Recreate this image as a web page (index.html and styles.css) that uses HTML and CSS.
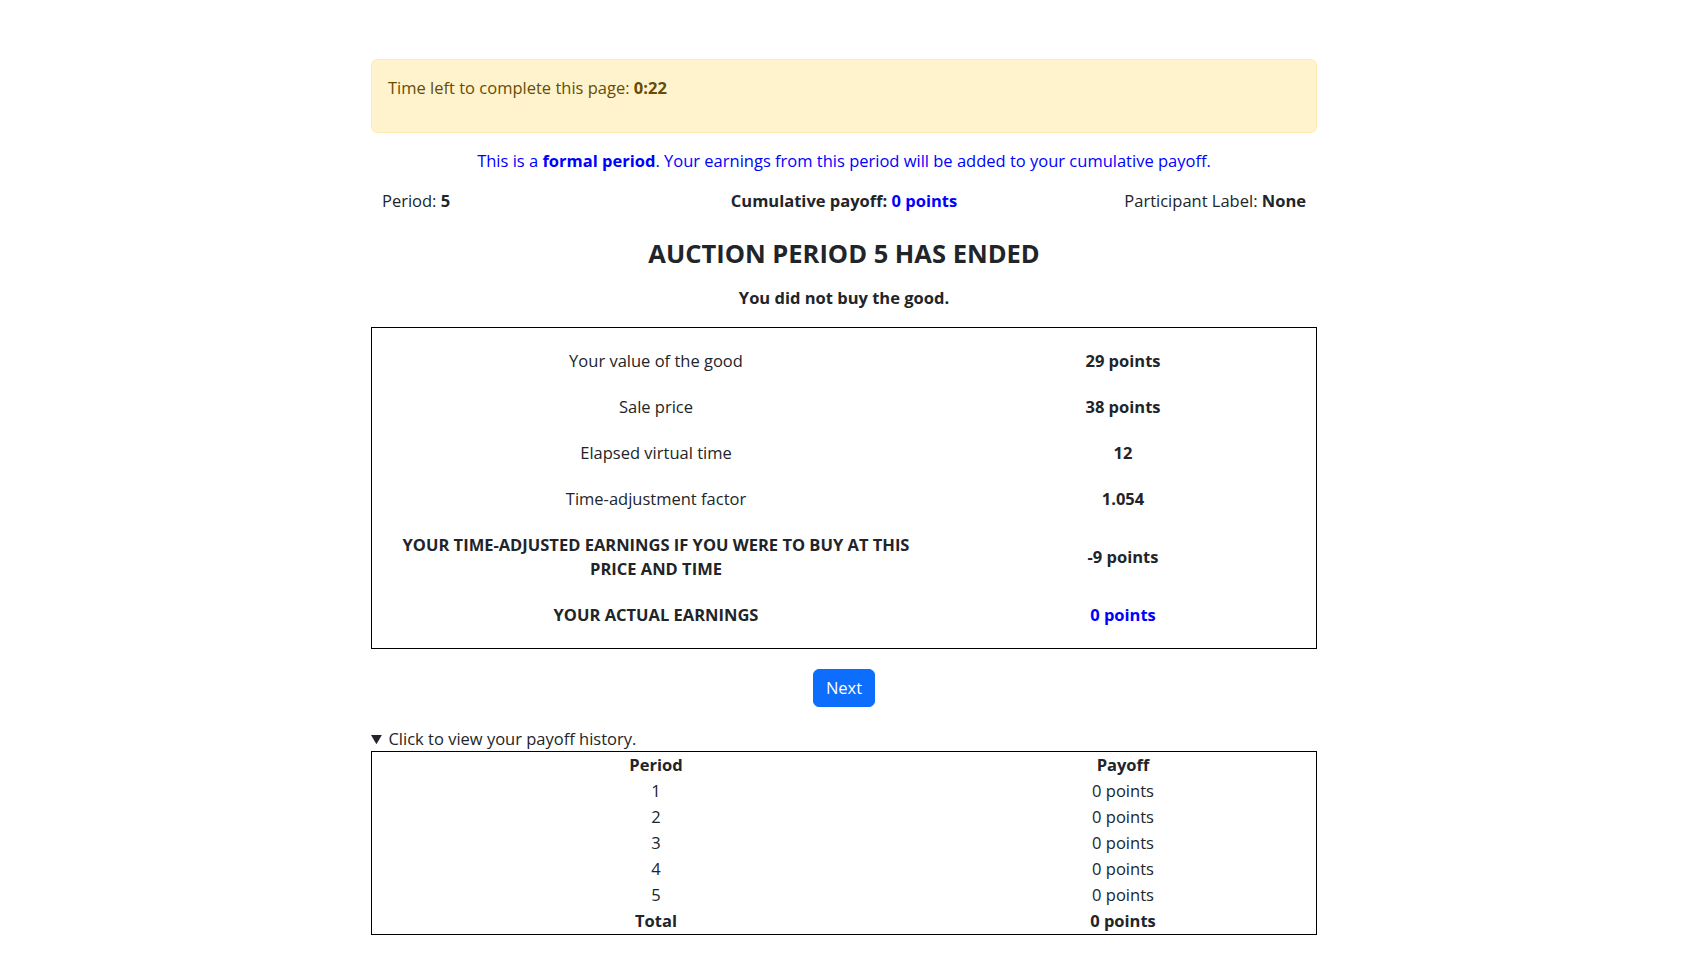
FILE: index.html
```html
<!DOCTYPE html>
<html lang="en">
<head>
<meta charset="utf-8">
<title>Auction period 5</title>
<link rel="stylesheet" href="styles.css">
</head>
<body>
<div class="page">
  <div class="alert"><p>Time left to complete this page: <b>0:22</b></p></div>
  <p class="notice">This is a <b>formal period</b>. Your earnings from this period will be added to your cumulative payoff.</p>
  <div class="info-row">
    <span class="info-left">Period: <b>5</b></span>
    <span class="info-mid"><b>Cumulative payoff: <span class="blue">0 points</span></b></span>
    <span class="info-right">Participant Label: <b>None</b></span>
  </div>
  <h3 class="title">AUCTION PERIOD 5 HAS ENDED</h3>
  <p class="result">You did not buy the good.</p>
  <div class="summary">
    <div class="cell">Your value of the good</div><div class="cell strong">29 points</div>
    <div class="cell">Sale price</div><div class="cell strong">38 points</div>
    <div class="cell">Elapsed virtual time</div><div class="cell strong">12</div>
    <div class="cell">Time-adjustment factor</div><div class="cell strong">1.054</div>
    <div class="cell strong">YOUR TIME-ADJUSTED EARNINGS IF YOU WERE TO BUY AT THIS PRICE AND TIME</div><div class="cell strong">-9 points</div>
    <div class="cell strong">YOUR ACTUAL EARNINGS</div><div class="cell strong blue">0 points</div>
  </div>
  <div class="btn-row"><button class="btn" type="button">Next</button></div>
  <details class="history" open>
    <summary>Click to view your payoff history.</summary>
    <div class="history-table">
      <div class="hcell strong">Period</div><div class="hcell strong">Payoff</div>
      <div class="hcell">1</div><div class="hcell">0 points</div>
      <div class="hcell">2</div><div class="hcell">0 points</div>
      <div class="hcell">3</div><div class="hcell">0 points</div>
      <div class="hcell">4</div><div class="hcell">0 points</div>
      <div class="hcell">5</div><div class="hcell">0 points</div>
      <div class="hcell strong">Total</div><div class="hcell strong">0 points</div>
    </div>
  </details>
</div>
</body>
</html>
```
FILE: styles.css
```css
* { box-sizing: border-box; }
html, body { margin: 0; padding: 0; background: #fff; }
body {
  font-family: "Open Sans", "Liberation Sans", sans-serif;
  font-size: 16.5px;
  line-height: 24px;
  color: #212529;
}
b, .strong { font-weight: 700; }
.page {
  width: 946px;
  margin: 0 auto;
  padding-top: 59px;
}
.alert {
  background: #fff3cd;
  border: 1px solid #ffecb5;
  border-radius: 6px;
  color: #664d03;
  padding: 16px;
  margin-bottom: 16px;
}
.alert p { margin: 0 0 16px; }
.notice {
  margin: 0 0 16px;
  text-align: center;
  color: #0000ff;
}
.info-row {
  display: grid;
  grid-template-columns: 1fr auto 1fr;
  padding: 0 11px;
}
.info-left { justify-self: start; }
.info-mid { justify-self: center; }
.info-right { justify-self: end; }
.blue { color: #0000ff; }
.title {
  margin: 24px 0 0;
  font-size: 25.5px;
  line-height: 32px;
  font-weight: 700;
  text-align: center;
}
.result {
  margin: 17px 0 0;
  font-weight: 700;
  text-align: center;
}
.summary {
  margin-top: 17px;
  border: 1px solid #000;
  padding: 10px 10px 10px 0;
  display: grid;
  grid-template-columns: 568px 366px;
}
.cell {
  padding: 11px 16px;
  text-align: center;
  display: flex;
  align-items: center;
  justify-content: center;
}
.btn-row {
  display: flex;
  justify-content: center;
  margin-top: 20px;
}
.btn {
  font-family: inherit;
  font-size: 16.5px;
  line-height: 24px;
  color: #fff;
  background: #0d6efd;
  border: 1px solid #0d6efd;
  border-radius: 6px;
  padding: 6px 12px;
  min-width: 62px;
}
.history { margin-top: 20px; }
.history summary { cursor: pointer; }
.history-table {
  border: 1px solid #000;
  display: grid;
  grid-template-columns: 568px 366px;
}
.hcell {
  padding: 1px 0;
  text-align: center;
}
```
